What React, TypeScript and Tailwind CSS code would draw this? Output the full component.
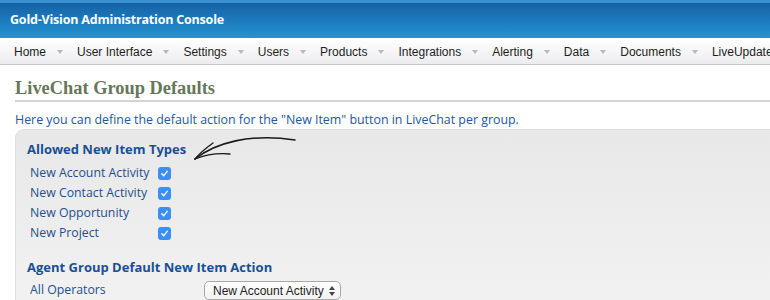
import React from 'react';

const navItems = ['Home', 'User Interface', 'Settings', 'Users', 'Products', 'Integrations', 'Alerting', 'Data', 'Documents', 'LiveUpdate'];

const itemTypes = ['New Account Activity', 'New Contact Activity', 'New Opportunity', 'New Project'];

const CheckBox: React.FC = () => (
  <span className="w-[13px] h-[13px] rounded-[3px] bg-[#3b8ff2] flex items-center justify-center">
    <svg width="9" height="9" viewBox="0 0 10 10" fill="none">
      <path d="M2 5.2 L4.2 7.4 L8 2.6" stroke="white" strokeWidth="1.6" strokeLinecap="round" strokeLinejoin="round" />
    </svg>
  </span>
);

const App: React.FC = () => {
  return (
    <div className="w-[770px] h-[300px] overflow-hidden bg-white font-['Open_Sans',sans-serif]">
      {/* header */}
      <div className="h-[38px] bg-gradient-to-b from-[#1562a6] to-[#2693d2] border-t-[3px] border-[#3a8fd0] flex items-center pl-[10px]">
        <span className="text-white font-bold text-[12.5px] tracking-[-0.2px]">Gold-Vision Administration Console</span>
      </div>

      {/* nav */}
      <div className="h-[27px] bg-gradient-to-b from-white to-[#ececef] border-t border-white border-b border-b-[#c8c8cc] flex items-center pl-[14px] font-['Liberation_Sans',Arial,sans-serif] text-[12px] text-[#1e1e1e] whitespace-nowrap">
        {navItems.map((item, i) => (
          <div key={item} className="flex items-center">
            <span>{item}</span>
            {i < navItems.length - 1 && (
              <span className="ml-[11px] mr-[14px] w-0 h-0 border-l-[3px] border-r-[3px] border-t-[4px] border-l-transparent border-r-transparent border-t-[#b8b8b8]" />
            )}
          </div>
        ))}
      </div>

      <div className="pl-[15px]">
        <h1 className="font-['Liberation_Serif',serif] font-bold text-[18.4px] text-[#66775a] pt-[12px] pb-[1px] leading-[22px] border-b-2 border-[#d4d4d4]">
          LiveChat Group Defaults
        </h1>

        <p className="text-[#1b58a0] text-[12.4px] mt-[9px] leading-[18px]">
          Here you can define the default action for the "New Item" button in LiveChat per group.
        </p>

        <div className="relative rounded-tl-[9px] border-l border-t border-[#dedede] bg-gradient-to-b from-[#e8e8e8] to-[#f3f3f3] h-[200px] pl-[11px] pt-[10px]">
          <h2 className="text-[#1a4f94] font-bold text-[13px] leading-[18px]">Allowed New Item Types</h2>

          <svg className="absolute left-[174px] top-[1px]" width="112" height="34" viewBox="0 0 112 34" fill="none">
            <path d="M5 28 C 25 12, 60 2, 105 9" stroke="#1a1a1a" strokeWidth="1.6" strokeLinecap="round" fill="none" />
            <path d="M5 28 C 10 22, 16 17, 23 12" stroke="#1a1a1a" strokeWidth="1.3" strokeLinecap="round" />
            <path d="M5 28 C 15 24, 28 22, 40 23" stroke="#1a1a1a" strokeWidth="1.3" strokeLinecap="round" />
          </svg>

          <div className="mt-[5px] pl-[3px]">
            {itemTypes.map(t => (
              <div key={t} className="flex items-center h-[20px]">
                <span className="w-[128px] text-[#1f4f8f] text-[12.3px]">{t}</span>
                <CheckBox />
              </div>
            ))}
          </div>

          <h2 className="text-[#1a4f94] font-bold text-[13px] leading-[18px] mt-[15px]">Agent Group Default New Item Action</h2>

          <div className="flex items-center mt-[5px] pl-[3px]">
            <span className="w-[174px] text-[#1f4f8f] text-[12.3px]">All Operators</span>
            <div className="w-[137px] h-[19px] rounded-[5px] border border-[#a8a8a8] bg-gradient-to-b from-white to-[#f2f2f2] flex items-center justify-between pl-[8px] pr-[5px] font-['Liberation_Sans',Arial,sans-serif] text-[12px] text-[#222]">
              <span>New Account Activity</span>
              <svg width="6" height="10" viewBox="0 0 6 10">
                <path d="M0 4 L3 0 L6 4 Z" fill="#444" />
                <path d="M0 6 L3 10 L6 6 Z" fill="#444" />
              </svg>
            </div>
          </div>
        </div>
      </div>
    </div>
  );
};

export default App;
